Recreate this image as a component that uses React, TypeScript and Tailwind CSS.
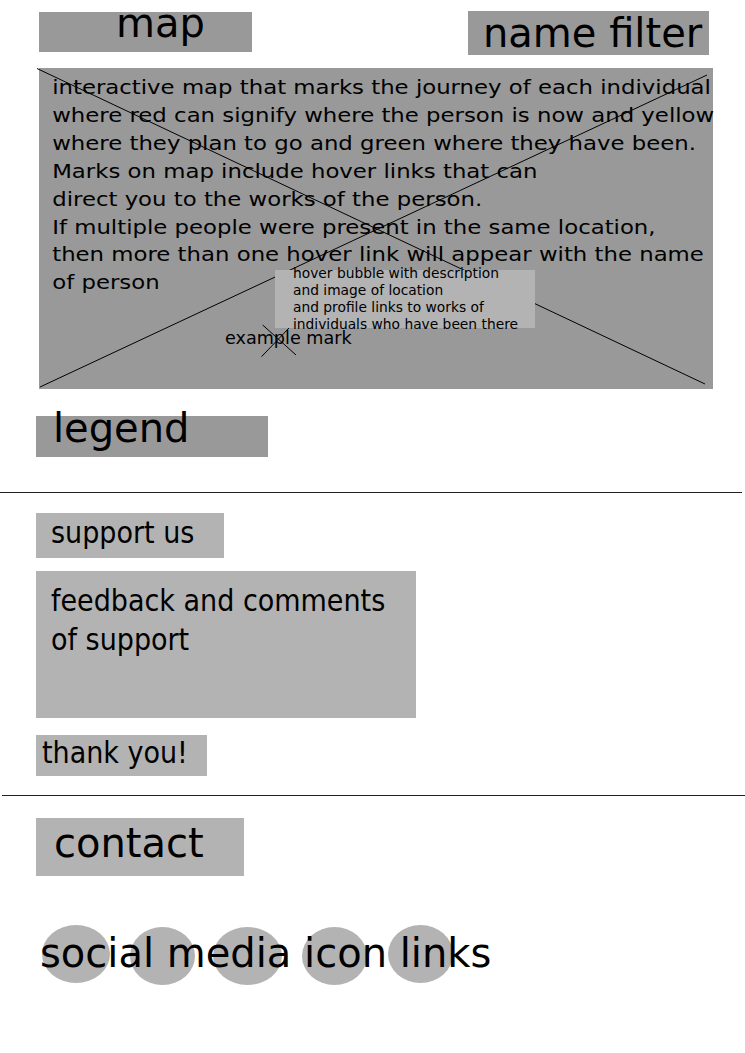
export default function App() {
  const mapLines = [
    "interactive map that marks the journey of each individual",
    "where red can signify where the person is now and yellow",
    "where they plan to go and green where they have been.",
    "Marks on map include hover links that can",
    "direct you to the works of the person.",
    "If multiple people were present in the same location,",
    "then more than one hover link will appear with the name",
    "of person",
  ];
  const bubbleLines = [
    "hover bubble with description",
    "and image of location",
    "and profile links to works of",
    "individuals who have been there",
  ];
  return (
    <div className="w-[745px] min-h-[1053px] bg-white text-black font-['DejaVu_Sans',sans-serif] overflow-hidden">
      {/* header */}
      <div className="flex justify-between items-start pt-[11px] pl-[39px] pr-[36px]">
        <div className="flow-root mt-[1px] w-[213px] h-[40px] bg-[#999999] pl-[77px]">
          <div className="-mt-[12px] text-[40px] leading-[normal] whitespace-nowrap">map</div>
        </div>
        <div className="flow-root w-[241px] h-[44px] bg-[#999999] pl-[15px]">
          <div className="-mt-[1px] text-[40px] leading-[normal] whitespace-nowrap">name filter</div>
        </div>
      </div>

      {/* map */}
      <div className="relative mt-[13px] ml-[39px] w-[674px] h-[321px] bg-[#999999]">
        <div className="pt-[6px] pl-[11px] text-[19px] leading-[27.9px] whitespace-nowrap origin-left scale-x-[1.2]">
          {mapLines.map((l) => (
            <div key={l}>{l}</div>
          ))}
        </div>
        <svg className="absolute left-0 top-0 overflow-visible" width="674" height="321">
          <line x1="-2" y1="0.5" x2="666" y2="316" stroke="#000" strokeWidth="1" />
          <line x1="1" y1="319" x2="668" y2="7" stroke="#000" strokeWidth="1" />
        </svg>
        <div className="flow-root absolute left-[236px] top-[202px] w-[260px] h-[58px] bg-[#b3b3b3] pl-[18px]">
          <div className="-mt-[5px] text-[13.8px] leading-[17px] whitespace-nowrap">
            {bubbleLines.map((l) => (
              <div key={l}>{l}</div>
            ))}
          </div>
        </div>
        <div className="absolute left-[186px] top-[262px] text-[17.6px] leading-none whitespace-nowrap">example mark</div>
        <svg className="absolute left-0 top-0 overflow-visible" width="674" height="321">
          <line x1="223.7" y1="257" x2="257" y2="287" stroke="#000" strokeWidth="1" />
          <line x1="222.5" y1="288.7" x2="250" y2="260" stroke="#000" strokeWidth="1" />
        </svg>
      </div>

      {/* legend */}
      <div className="flow-root mt-[27px] ml-[36px] w-[232px] h-[41px] bg-[#999999] pl-[17px]">
        <div className="-mt-[11px] text-[40px] leading-[normal] whitespace-nowrap">legend</div>
      </div>

      <div className="mt-[35px] w-[742px] h-px bg-[#222222]" />

      {/* support */}
      <div className="font-['DejaVu_Sans_Condensed','DejaVu_Sans',sans-serif] font-stretch-condensed">
        <div className="mt-[20px] ml-[36px] w-[188px] h-[45px] bg-[#b3b3b3] pl-[15px]">
          <div className="pt-[2px] text-[30px] leading-[normal] whitespace-nowrap">support us</div>
        </div>
        <div className="mt-[13px] ml-[36px] w-[380px] h-[147px] bg-[#b3b3b3] pl-[15px]">
          <div className="pt-[11px] text-[30px] leading-[38.5px]">
            <div>feedback and comments</div>
            <div>of support</div>
          </div>
        </div>
        <div className="mt-[17px] ml-[36px] w-[171px] h-[41px] bg-[#b3b3b3] pl-[6px]">
          <div className="text-[30px] leading-[normal] whitespace-nowrap">thank you!</div>
        </div>
      </div>

      <div className="mt-[19px] ml-[2px] w-[743px] h-px bg-[#222222]" />

      {/* contact */}
      <div className="mt-[22px] ml-[36px] w-[208px] h-[58px] bg-[#b3b3b3] pl-[18px]">
        <div className="pt-[2px] text-[40px] leading-[normal] whitespace-nowrap">contact</div>
      </div>

      {/* social */}
      <div className="relative mt-[49px] ml-[42px] h-[60px]">
        <div className="flex items-start">
          <div className="w-[68px] h-[58px] rounded-[50%] bg-[#b3b3b3]" />
          <div className="ml-[20px] mt-[2px] w-[65px] h-[58px] rounded-[50%] bg-[#b3b3b3]" />
          <div className="ml-[18px] mt-[2px] w-[69px] h-[58px] rounded-[50%] bg-[#b3b3b3]" />
          <div className="ml-[20px] mt-[2px] w-[65px] h-[58px] rounded-[50%] bg-[#b3b3b3]" />
          <div className="ml-[21px] w-[65px] h-[58px] rounded-[50%] bg-[#b3b3b3]" />
        </div>
        <div className="absolute left-[-2px] top-[5px] text-[40px] leading-[normal] whitespace-nowrap">social media icon links</div>
      </div>
    </div>
  );
}
